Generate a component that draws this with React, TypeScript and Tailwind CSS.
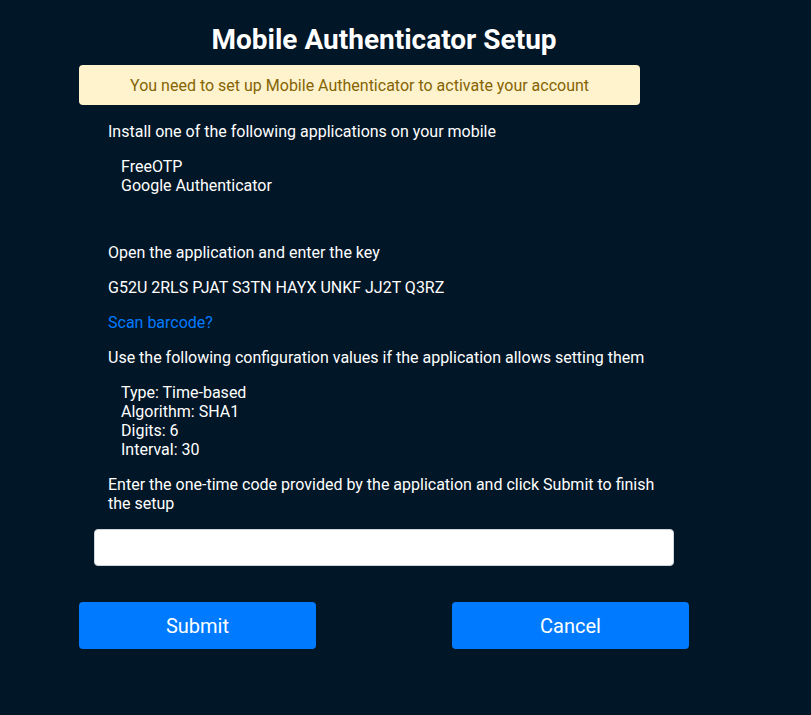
import React from "react";

const MobileAuthSetup = () => {
  return (
    <div className="min-h-screen w-full bg-[#011627] font-['Roboto',sans-serif] text-white">
      <div className="ml-[79px] w-[610px] pt-[23px]">
        <h1 className="text-center text-[28px] font-bold leading-[34px]">Mobile Authenticator Setup</h1>

        {/* Alert */}
        <div className="mt-[8px] flex h-[40px] w-[92%] items-center justify-center rounded bg-[#fff3cd] pt-px text-[16px] text-[#856404]">
          You need to set up Mobile Authenticator to activate your account
        </div>

        <div className="px-[29px] text-[16px] leading-[19px]">
          <p className="mt-[17px]">Install one of the following applications on your mobile</p>
          <ul className="mt-[16px] pl-[13px]">
            <li>FreeOTP</li>
            <li>Google Authenticator</li>
          </ul>
          <p className="mt-[48px]">Open the application and enter the key</p>
          <p className="mt-[16px]">G52U 2RLS PJAT S3TN HAYX UNKF JJ2T Q3RZ</p>
          <p className="mt-[16px]">
            <a href="#" className="text-[#007bff]">Scan barcode?</a>
          </p>
          <p className="mt-[16px]">Use the following configuration values if the application allows setting them</p>
          <ul className="mt-[16px] pl-[13px]">
            <li>Type: Time-based</li>
            <li>Algorithm: SHA1</li>
            <li>Digits: 6</li>
            <li>Interval: 30</li>
          </ul>
          <p className="mt-[16px]">Enter the one-time code provided by the application and click Submit to finish the setup</p>
        </div>

        <div className="mt-[16px] flex justify-center">
          <input
            type="text"
            className="h-[37px] w-[95%] rounded border border-[#ced4da] bg-white px-3 text-black outline-none"
          />
        </div>

        <div className="mt-[36px] flex justify-between">
          <button className="h-[47px] w-[237px] rounded bg-[#007bff] text-[20px] text-white">Submit</button>
          <button className="h-[47px] w-[237px] rounded bg-[#007bff] text-[20px] text-white">Cancel</button>
        </div>
      </div>
    </div>
  );
};

export default function App() {
  return <MobileAuthSetup />;
}
